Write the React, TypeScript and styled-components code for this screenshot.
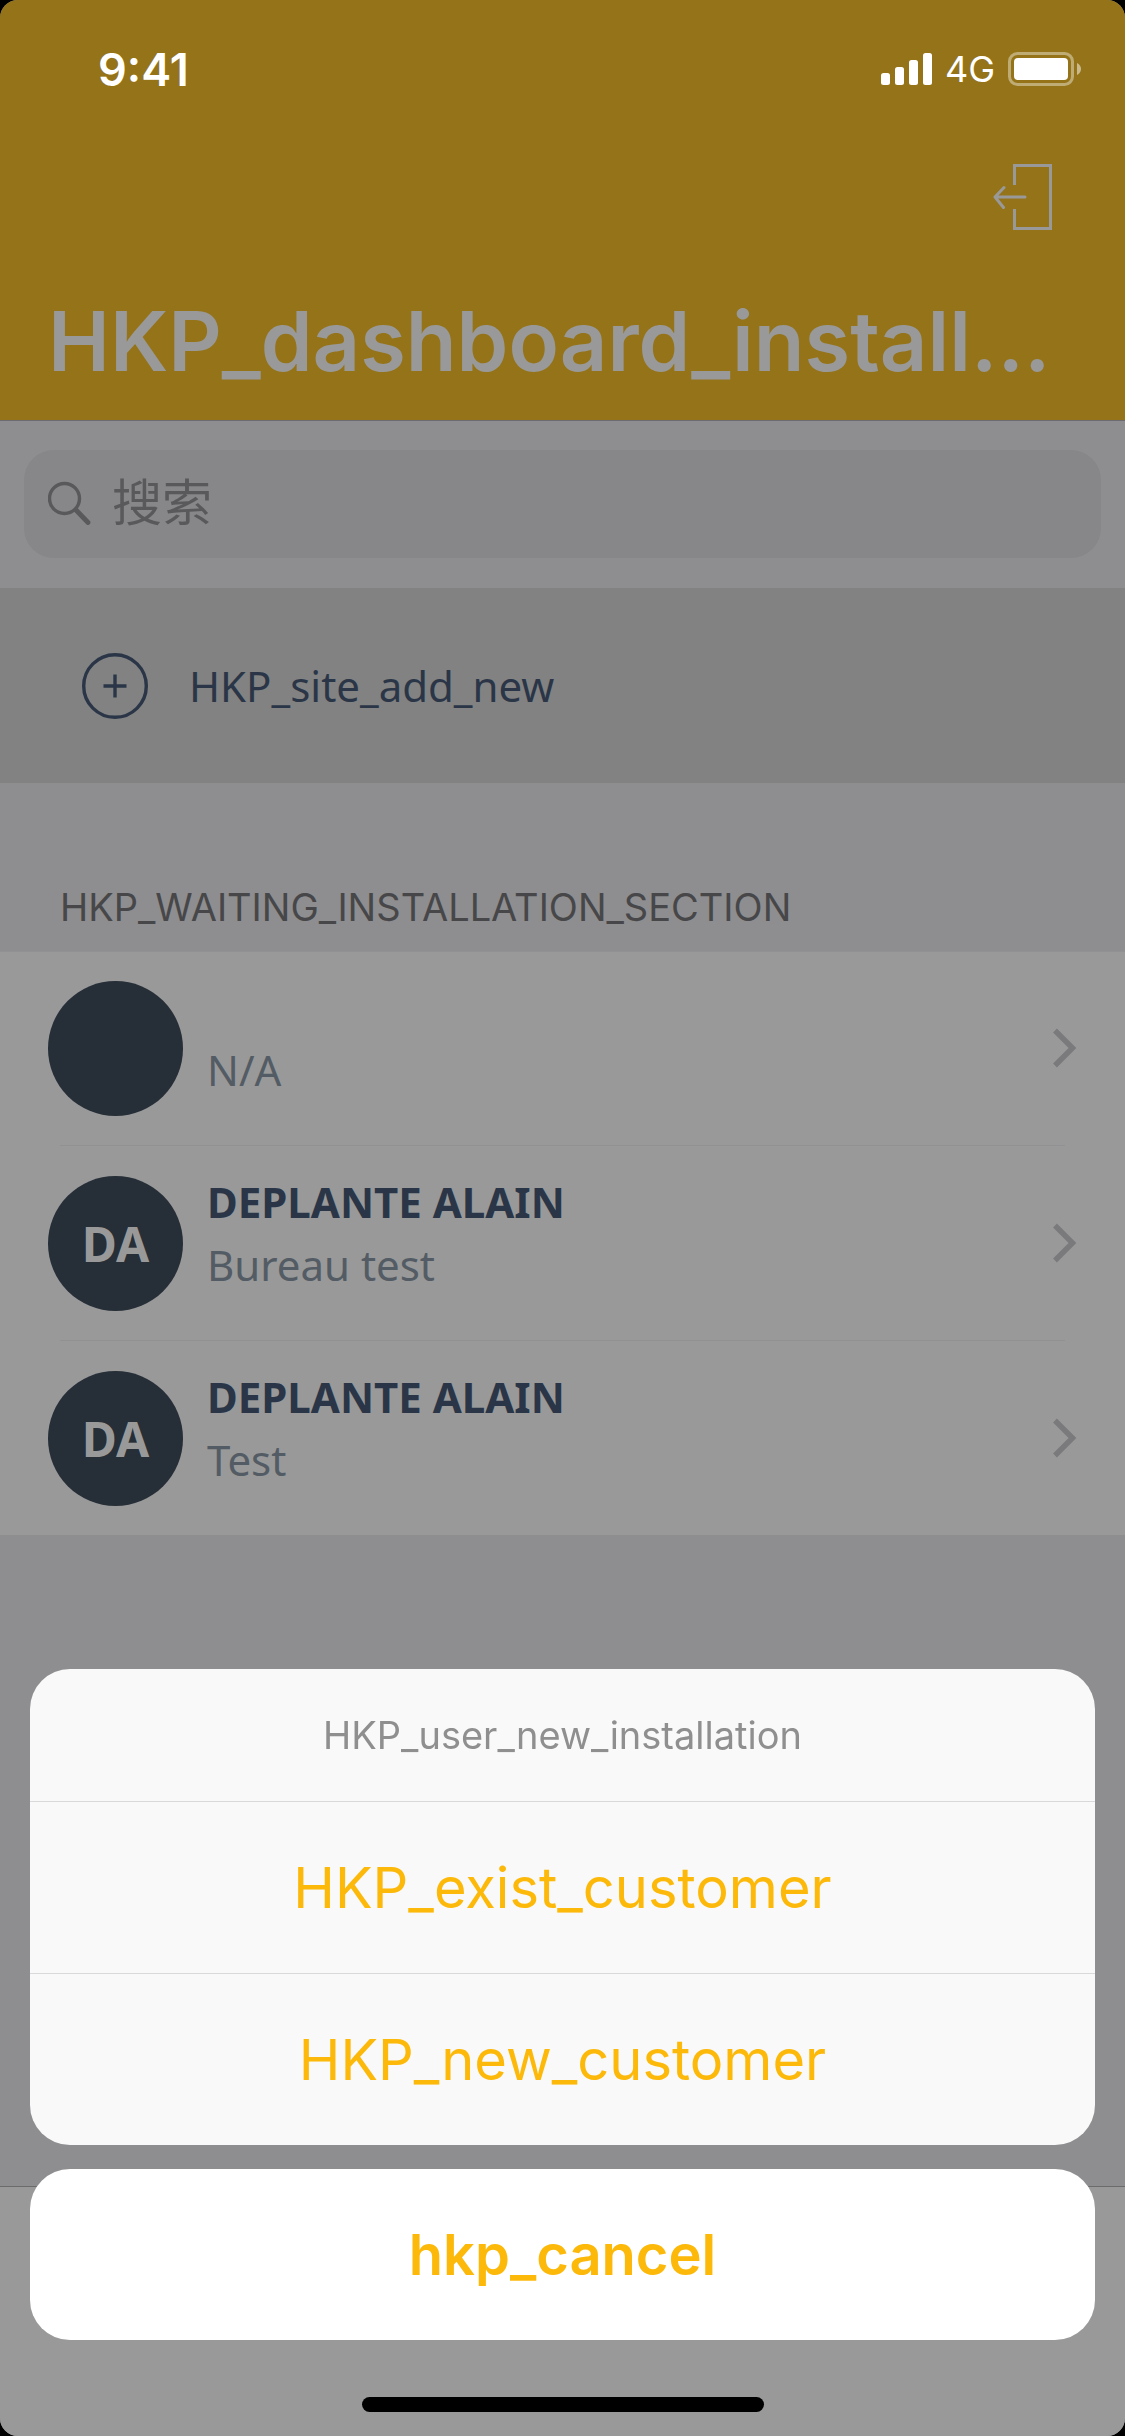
import React from "react";
import styled, { createGlobalStyle } from "styled-components";

const color = {
  gold: "#957318",
  accent: "#fcb90a",
  grouped: "#8e8e90",
  card: "#999999",
  hairline: "#919193",
  field: "#878789",
  addRow: "#828282",
  navy: "#2a3647",
  avatar: "#262e37",
  slate: "#535c64",
  caption: "#474749",
};

const ui = `Inter, Roboto, "Noto Sans CJK SC", sans-serif`;
const body = `"Noto Sans", "Noto Sans CJK SC", sans-serif`;

const GlobalStyle = createGlobalStyle`
  *, *::before, *::after { box-sizing: border-box; }
  body { margin: 0; background: #000; font-family: ${ui}; }
  button, input { font: inherit; border: 0; margin: 0; padding: 0; background: none; color: inherit; }
  button { cursor: pointer; }
  h1, h2, p, ul { margin: 0; padding: 0; }
  ul { list-style: none; }
  svg { display: block; }
`;

const Screen = styled.div`
  display: flex;
  flex-direction: column;
  min-height: 100vh;
  border-radius: 18px;
  overflow: hidden;
  background: ${color.grouped};
`;

const Header = styled.header`
  background: ${color.gold};
  border-bottom: 1px solid #6b6b70;
`;

const StatusBar = styled.div`
  display: flex;
  align-items: center;
  justify-content: space-between;
  height: 138px;
  padding: 0 44px 0 98px;
  color: #fff;
`;

const Clock = styled.time`
  font-size: 45px;
  font-weight: 600;
`;

const StatusIcons = styled.div`
  display: flex;
  align-items: center;
  gap: 13px;
`;

const Network = styled.span`
  font-size: 36px;
  line-height: 40px;
`;

const NavBar = styled.div`
  display: flex;
  align-items: center;
  justify-content: flex-end;
  height: 118px;
  padding: 0 72px;
`;

const IconButton = styled.button`
  color: ${color.card};
`;

const Title = styled.h1`
  padding: 29px 48px 23px;
  font-size: 83px;
  font-weight: 600;
  line-height: 112px;
  white-space: nowrap;
  color: ${color.card};
`;

const SearchBar = styled.form`
  padding: 29px 24px 30px;
`;

const SearchField = styled.label`
  display: flex;
  align-items: center;
  gap: 20px;
  height: 108px;
  padding: 0 24px 2px;
  border-radius: 30px;
  background: ${color.field};
  color: #59595b;
`;

const SearchInput = styled.input`
  flex: 1;
  min-width: 0;
  font-size: 50px;
  outline: none;
  &::placeholder {
    color: #59595b;
    opacity: 1;
  }
`;

const AddButton = styled.button`
  display: flex;
  align-items: center;
  gap: 41px;
  height: 195px;
  padding: 0 82px;
  background: ${color.addRow};
  color: ${color.navy};
  font-family: ${body};
  font-size: 42px;
`;

const SectionTitle = styled.h2`
  padding: 100px 60px 20px;
  font-size: 38px;
  font-weight: 400;
  line-height: 48px;
  color: ${color.caption};
`;

const List = styled.ul`
  background: ${color.card};
  box-shadow: inset 0 1px ${color.hairline};
`;

const Item = styled.li`
  & + &::before {
    content: "";
    display: block;
    height: 1px;
    margin: 0 60px;
    background: ${color.hairline};
  }
`;

const RowButton = styled.button`
  display: flex;
  align-items: center;
  gap: 24px;
  width: 100%;
  height: 194px;
  padding: 0 48px;
  text-align: left;
  font-family: ${body};
`;

const Avatar = styled.span`
  display: grid;
  place-items: center;
  flex: none;
  width: 135px;
  height: 135px;
  border-radius: 50%;
  background: ${color.avatar};
  color: ${color.card};
  font-size: 48px;
  font-weight: 700;
`;

const RowText = styled.span`
  display: flex;
  flex: 1;
  flex-direction: column;
  padding-bottom: 20px;
  font-size: 42px;
  line-height: 63px;
`;

const Name = styled.span`
  min-height: 63px;
  font-weight: 700;
  color: ${color.navy};
`;

const Place = styled.span`
  color: ${color.slate};
`;

const TabBar = styled.footer`
  height: 250px;
  margin-top: auto;
  border-top: 1px solid #6b6b6b;
  background: ${color.card};
`;

const Overlay = styled.div`
  position: fixed;
  inset: auto 0 0 0;
  display: flex;
  flex-direction: column;
  gap: 24px;
  padding: 0 30px 24px;
`;

const Sheet = styled.section`
  display: flex;
  flex-direction: column;
  border-radius: 40px;
  overflow: hidden;
  background: #f9f9f9;
`;

const SheetTitle = styled.p`
  font-size: 38px;
  line-height: 132px;
  text-align: center;
  color: #8f8f8f;
`;

const SheetAction = styled.button`
  height: 172px;
  border-top: 1px solid #d9d9db;
  font-size: 56px;
  color: ${color.accent};
`;

const CancelButton = styled.button`
  height: 171px;
  border-radius: 40px;
  background: #fff;
  font-size: 56px;
  font-weight: 600;
  color: ${color.accent};
`;

const HomeIndicator = styled.div`
  align-self: center;
  width: 402px;
  height: 15px;
  margin-top: 33px;
  border-radius: 8px;
  background: #000;
`;

const SignalIcon = () => (
  <svg width="51" height="34" viewBox="0 0 51 34" fill="currentColor" aria-hidden="true">
    <rect x="0" y="21" width="9" height="12" rx="2.5" />
    <rect x="14" y="15" width="9" height="18" rx="2.5" />
    <rect x="28" y="8" width="9" height="25" rx="2.5" />
    <rect x="42" y="1" width="9" height="32" rx="2.5" />
  </svg>
);

const BatteryIcon = () => (
  <svg width="73" height="34" viewBox="0 0 73 34" aria-hidden="true">
    <rect x="1.5" y="1.5" width="63" height="31" rx="8" fill="none" stroke="#fff" strokeOpacity=".4" strokeWidth="3" />
    <rect x="6" y="6" width="54" height="22" rx="4" fill="#fff" />
    <path d="M69 11c2.400 1 4 3.400 4 6s-1.600 5-4 6z" fill="#fff" fillOpacity=".5" />
  </svg>
);

const ExitIcon = () => (
  <svg width="60" height="66" viewBox="0 0 60 66" fill="none" stroke="currentColor" strokeWidth="3" aria-hidden="true">
    <path d="M21.500 21V1.500h36v63h-36V45" />
    <path d="M2 33H32M11 23.500L2 33l8.500 10.500" strokeLinecap="round" strokeLinejoin="round" />
  </svg>
);

const SearchIcon = () => (
  <svg width="44" height="44" viewBox="0 0 44 44" fill="none" stroke="currentColor" aria-hidden="true">
    <circle cx="16.500" cy="17.500" r="15" strokeWidth="3.400" />
    <path d="M28 29l12 12.500" strokeWidth="4.800" strokeLinecap="round" />
  </svg>
);

const AddIcon = () => (
  <svg width="66" height="66" viewBox="0 0 66 66" fill="none" stroke="currentColor" strokeWidth="3.400" aria-hidden="true">
    <circle cx="33" cy="33" r="31.300" />
    <path d="M33 21.500v23M21.500 33h23" />
  </svg>
);

const Chevron = () => (
  <svg width="24" height="40" viewBox="0 0 24 40" fill="none" stroke="#7a7a7c" strokeWidth="5.400" aria-hidden="true">
    <path d="M2 2.500L19.500 20 2 37.500" />
  </svg>
);

const sites = [
  { id: 1, initials: "", name: "", place: "N/A" },
  { id: 2, initials: "DA", name: "DEPLANTE ALAIN", place: "Bureau test" },
  { id: 3, initials: "DA", name: "DEPLANTE ALAIN", place: "Test" },
];

export default function App() {
  return (
    <>
      <GlobalStyle />
      <Screen>
        <Header>
          <StatusBar>
            <Clock>9:41</Clock>
            <StatusIcons>
              <SignalIcon />
              <Network>4G</Network>
              <BatteryIcon />
            </StatusIcons>
          </StatusBar>
          <NavBar>
            <IconButton type="button" aria-label="Exit">
              <ExitIcon />
            </IconButton>
          </NavBar>
          <Title>HKP_dashboard_install...</Title>
        </Header>
        <SearchBar role="search">
          <SearchField>
            <SearchIcon />
            <SearchInput type="text" placeholder="搜索" aria-label="搜索" />
          </SearchField>
        </SearchBar>
        <AddButton type="button">
          <AddIcon />
          HKP_site_add_new
        </AddButton>
        <SectionTitle>HKP_WAITING_INSTALLATION_SECTION</SectionTitle>
        <List>
          {sites.map((site) => (
            <Item key={site.id}>
              <RowButton type="button">
                <Avatar>{site.initials}</Avatar>
                <RowText>
                  <Name>{site.name}</Name>
                  <Place>{site.place}</Place>
                </RowText>
                <Chevron />
              </RowButton>
            </Item>
          ))}
        </List>
        <TabBar />
      </Screen>
      <Overlay>
        <Sheet role="dialog" aria-labelledby="sheet-title">
          <SheetTitle id="sheet-title">HKP_user_new_installation</SheetTitle>
          <SheetAction type="button">HKP_exist_customer</SheetAction>
          <SheetAction type="button">HKP_new_customer</SheetAction>
        </Sheet>
        <CancelButton type="button">hkp_cancel</CancelButton>
        <HomeIndicator />
      </Overlay>
    </>
  );
}
